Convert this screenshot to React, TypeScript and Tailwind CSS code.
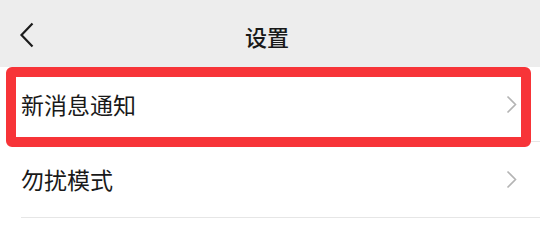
import React from "react";

const font = { fontFamily: '"Noto Sans CJK SC", "Noto Sans", sans-serif' };

function ChevronRight() {
  return (
    <svg width="11" height="19" viewBox="0 0 11 19" fill="none">
      <polyline points="1.5,1.5 9.5,9.5 1.5,17.5" stroke="#b4b4b4" strokeWidth="1.6" strokeLinejoin="miter" />
    </svg>
  );
}

export default function App() {
  return (
    <div className="w-[540px] h-[232px] bg-white overflow-hidden font-['Noto_Sans_CJK_SC',sans-serif]" style={font}>
      <div className="relative h-[67px] bg-[#ededed] flex items-center justify-center">
        <div className="absolute left-[19px] top-[22px]">
          <svg width="16" height="26" viewBox="0 0 16 26" fill="none">
            <polyline points="13.5,1.5 2.5,13 13.5,24.5" stroke="#1c1c1c" strokeWidth="2.2" />
          </svg>
        </div>
        <span className="text-[22px] font-medium text-[#191919] leading-none mt-[4px] -ml-[6px]">设置</span>
      </div>
      <div className="relative">
        <div className="h-[75px] ml-[21px] border-b border-[#e6e6e6] flex items-center justify-between pr-[23px]">
          <span className="text-[23px] text-[#191919] leading-none">新消息通知</span>
          <ChevronRight />
        </div>
        <div className="absolute left-[6px] top-0 w-[525px] h-[80px] border-[10px] border-[#f73438] rounded-[6px]" />
      </div>
      <div className="h-[76px] ml-[21px] border-b border-[#e6e6e6] flex items-center justify-between pr-[23px]">
        <span className="text-[23px] text-[#191919] leading-none">勿扰模式</span>
        <ChevronRight />
      </div>
    </div>
  );
}
